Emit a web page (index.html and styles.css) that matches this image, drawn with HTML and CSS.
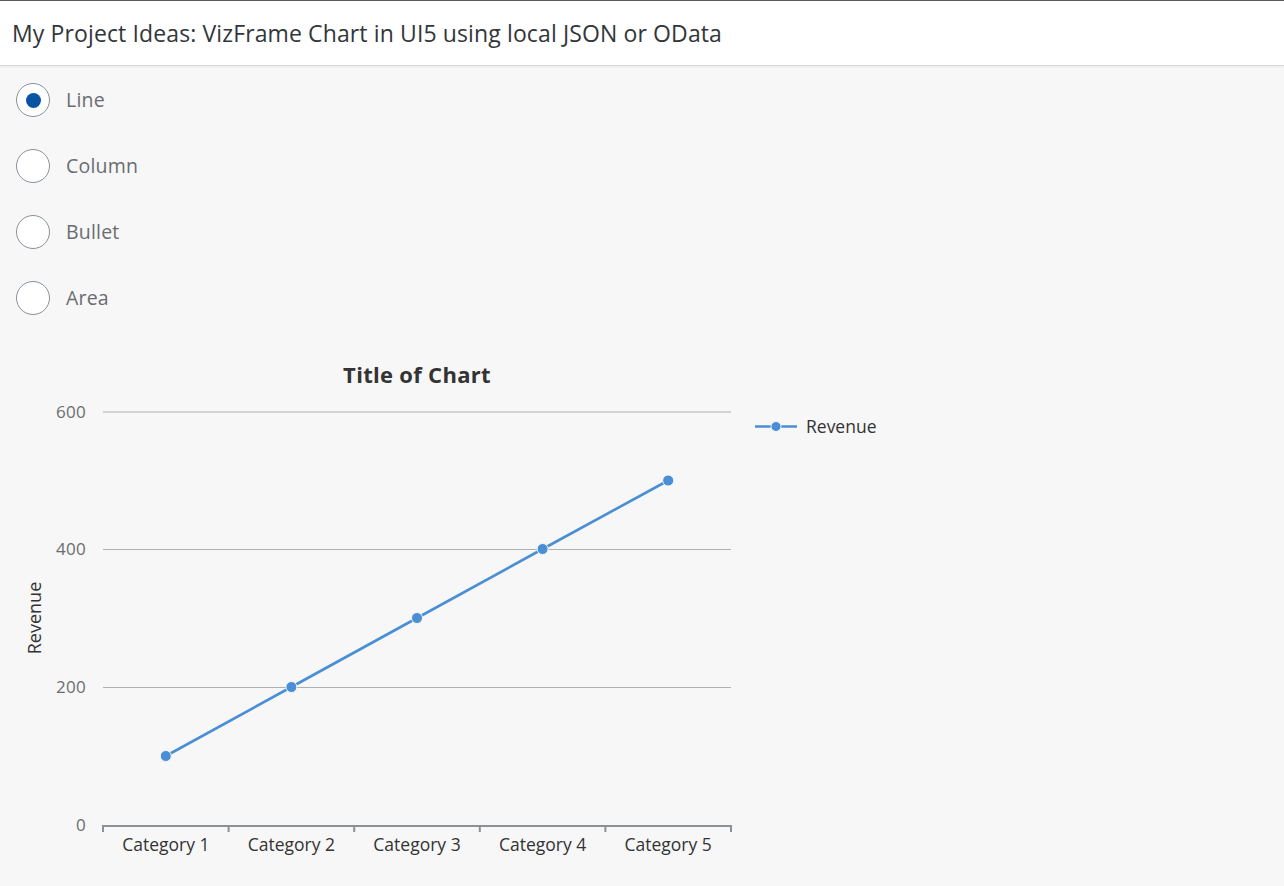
FILE: index.html
```html
<!DOCTYPE html>
<html>
<head>
<meta charset="utf-8">
<link rel="stylesheet" href="styles.css">
</head>
<body>
<header class="bar"><h1 class="bar-title">My Project Ideas: VizFrame Chart in UI5 using local JSON or OData</h1></header>
<main class="content">
  <div class="radio-group">
    <label class="radio"><span class="radio-circle checked"></span><span class="radio-label">Line</span></label>
    <label class="radio"><span class="radio-circle"></span><span class="radio-label">Column</span></label>
    <label class="radio"><span class="radio-circle"></span><span class="radio-label">Bullet</span></label>
    <label class="radio"><span class="radio-circle"></span><span class="radio-label">Area</span></label>
  </div>
  <div class="chart">
    <svg class="chart-svg" width="900" height="555" viewBox="0 331 900 555">
      <text class="c-title" x="417" y="383" text-anchor="middle">Title of Chart</text>
      <g class="grid">
        <line x1="103" y1="412" x2="731" y2="412"/>
        <line x1="103" y1="549.5" x2="731" y2="549.5"/>
        <line x1="103" y1="687.5" x2="731" y2="687.5"/>
      </g>
      <g class="ylab" text-anchor="end">
        <text x="86" y="418">600</text>
        <text x="86" y="555">400</text>
        <text x="86" y="693">200</text>
        <text x="86" y="831">0</text>
      </g>
      <text class="ytitle" transform="translate(41,618) rotate(-90)" text-anchor="middle">Revenue</text>
      <g class="axis">
        <line x1="102" y1="826" x2="732" y2="826"/>
        <line x1="103" y1="826" x2="103" y2="832"/>
        <line x1="228.6" y1="826" x2="228.6" y2="832"/>
        <line x1="354.2" y1="826" x2="354.2" y2="832"/>
        <line x1="479.8" y1="826" x2="479.8" y2="832"/>
        <line x1="605.4" y1="826" x2="605.4" y2="832"/>
        <line x1="731" y1="826" x2="731" y2="832"/>
      </g>
      <g class="xlab" text-anchor="middle">
        <text x="165.8" y="851">Category 1</text>
        <text x="291.4" y="851">Category 2</text>
        <text x="417" y="851">Category 3</text>
        <text x="542.6" y="851">Category 4</text>
        <text x="668.2" y="851">Category 5</text>
      </g>
      <polyline class="series" points="165.8,756 291.4,687 417,618 542.6,549 668.2,480.5"/>
      <g class="dots">
        <circle cx="165.8" cy="756" r="5.5"/>
        <circle cx="291.4" cy="687" r="5.5"/>
        <circle cx="417" cy="618" r="5.5"/>
        <circle cx="542.6" cy="549" r="5.5"/>
        <circle cx="668.2" cy="480.5" r="5.5"/>
      </g>
      <line class="series" x1="755" y1="426.5" x2="797" y2="426.5"/>
      <circle class="legend-dot" cx="776" cy="426.5" r="5"/>
      <text class="legend-text" x="806" y="432.5">Revenue</text>
    </svg>
  </div>
</main>
</body>
</html>
```
FILE: styles.css
```css
html, body {
  margin: 0;
  padding: 0;
  background: #f7f7f7;
  font-family: "Open Sans", "Noto Sans", sans-serif;
}
.bar {
  height: 64px;
  background: #ffffff;
  border-top: 1px solid #5a5a5a;
  border-bottom: 1px solid #d9d9d9;
  box-shadow: 0 1px 2px rgba(0,0,0,0.06);
  display: flex;
  align-items: center;
  padding-left: 12px;
}
.bar-title {
  margin: 0;
  font-weight: 400;
  font-size: 23px;
  color: #32363a;
  letter-spacing: 0.12px;
}
.content {
  padding-top: 1px;
}
.radio-group {
  display: flex;
  flex-direction: column;
}
.radio {
  height: 66px;
  display: flex;
  align-items: center;
  padding-left: 16px;
}
.radio-circle {
  width: 32px;
  height: 32px;
  border: 1px solid #89919a;
  border-radius: 50%;
  background: #ffffff;
  display: flex;
  align-items: center;
  justify-content: center;
  box-sizing: content-box;
}
.radio-circle.checked::after {
  content: "";
  width: 15px;
  height: 15px;
  border-radius: 50%;
  background: #0854a0;
}
.radio-label {
  margin-left: 16px;
  font-size: 19.5px;
  letter-spacing: 0.2px;
  color: #6a6d70;
  position: relative;
  top: -1px;
}
.chart-svg {
  display: block;
  font-family: "Open Sans", "Noto Sans", sans-serif;
}
.c-title {
  font-size: 22px;
  font-weight: 700;
  fill: #333333;
  letter-spacing: 0.3px;
}
.grid line {
  stroke: #b0b0b0;
  stroke-width: 1.2;
}
.ylab text {
  font-size: 17px;
  letter-spacing: 0.3px;
  fill: #6a6d70;
}
.ytitle {
  font-size: 18px;
  fill: #333333;
}
.axis line {
  stroke: #8c9196;
  stroke-width: 2;
}
.xlab text {
  font-size: 17.5px;
  fill: #333333;
}
.series {
  fill: none;
  stroke: #4a8ed5;
  stroke-width: 2.6;
}
.dots circle, .legend-dot {
  fill: #4a8ed5;
  stroke: #f7f7f7;
  stroke-width: 1;
}
.legend-text {
  font-size: 17.5px;
  fill: #333333;
}
```
